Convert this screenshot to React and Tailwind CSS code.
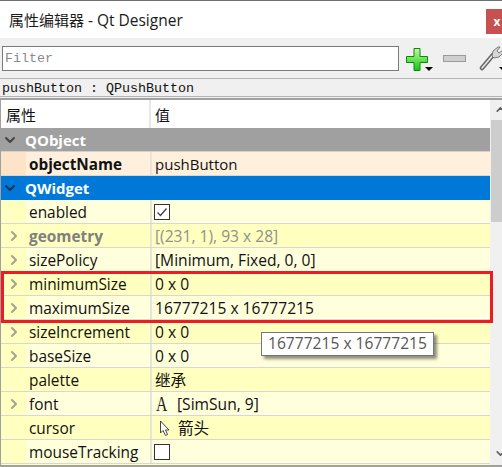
import { ChevronDown, ChevronRight } from 'lucide-react'

const ROWS = [
  { name: 'enabled', check: 'on', light: true },
  { name: 'geometry', value: '[(231, 1), 93 x 28]', arrow: true, muted: true },
  { name: 'sizePolicy', value: '[Minimum, Fixed, 0, 0]', arrow: true, light: true },
  { name: 'minimumSize', value: '0 x 0', arrow: true },
  { name: 'maximumSize', value: '16777215 x 16777215', arrow: true, light: true },
  { name: 'sizeIncrement', value: '0 x 0', arrow: true },
  { name: 'baseSize', value: '0 x 0', arrow: true, light: true },
  { name: 'palette', value: '继承' },
  { name: 'font', value: '[SimSun, 9]', arrow: true, light: true, icon: 'font' },
  { name: 'cursor', value: '箭头', icon: 'cursor' },
  { name: 'mouseTracking', check: 'off', light: true },
]

function PlusIcon() {
  return (
    <svg width="22" height="23" viewBox="0 0 22 23" className="shrink-0">
      <defs>
        <linearGradient id="plusFill" x1="0" y1="0" x2="0" y2="1">
          <stop offset="0" stopColor="#c4f7a8" />
          <stop offset="1" stopColor="#12c80e" />
        </linearGradient>
      </defs>
      <path d="M8 .5h6v8h7.5v6H14v8H8v-8H.5v-6H8z" fill="url(#plusFill)" stroke="#0a8a0a" strokeWidth="1" />
    </svg>
  )
}

function WrenchIcon() {
  return (
    <svg width="24" height="25" viewBox="0 0 24 25" className="shrink-0">
      <path d="M3 22 L14 9" stroke="#666666" strokeWidth="4.5" strokeLinecap="round" />
      <path d="M3 22 L14 9" stroke="#e8e8e8" strokeWidth="1.6" strokeLinecap="round" />
      <path d="M13 10 L14 5 L19 1 L21 1 L18 5 L20 7 L24 4 L24 7 L20 11 L15 12 Z" fill="#d6d6d6" stroke="#777777" strokeWidth="1" />
    </svg>
  )
}

function DropArrow() {
  return <span className="block shrink-0 w-0 h-0 border-x-[4px] border-x-transparent border-t-[4px] border-t-black" />
}

function CheckBox({ on }) {
  return (
    <span className="flex items-center justify-center w-[16px] h-[16px] -ml-[1px] -mt-[1px] bg-white border border-[#333333]">
      {on && (
        <svg width="12" height="12" viewBox="0 0 12 12">
          <path d="M1.5 6.5 L4.5 9.5 L10.5 2.5" fill="none" stroke="#444444" strokeWidth="1.3" />
        </svg>
      )}
    </span>
  )
}

function ValueIcon({ type }) {
  if (type === 'font') {
    return (
      <span className="w-[22px] pl-[1px] text-[21px] leading-none text-[#222222] [font-family:'Liberation_Serif',serif]">
        <span className="inline-block scale-x-75 origin-left">A</span>
      </span>
    )
  }
  return (
    <span className="flex w-[23px] pl-[4px] -mt-[1px]">
      <svg width="12" height="17" viewBox="0 0 12 17">
        <path d="M1.5 1 V13 L4 10.5 L6.5 15.5 L8.5 14.5 L6.5 10 H10 Z" fill="#ffffff" stroke="#444444" strokeWidth="1" />
      </svg>
    </span>
  )
}

function PropRow({ row }) {
  const bg = row.light ? 'bg-[#ffffdc]' : 'bg-[#ffffbf]'
  return (
    <div className={`flex h-[24px] border-b border-[#d8d8d0] ${bg}`}>
      <div className="flex items-center justify-center w-[25px] bg-[#ffffbf]">
        {row.arrow && <ChevronRight size={16} strokeWidth={3} className="text-[#a3a38e]" />}
      </div>
      <div className={`flex items-center w-[126px] pl-[3px] pt-[2px] border-r-2 border-[#e6e6d8] text-[15.4px] ${row.muted ? 'font-bold text-[#808080]' : ''}`}>
        {row.name}
      </div>
      <div className={`flex items-center flex-1 pl-[3px] pt-[2px] text-[15.6px] ${row.muted ? 'text-[#909090]' : ''}`}>
        {row.icon && <ValueIcon type={row.icon} />}
        {row.check ? <CheckBox on={row.check === 'on'} /> : row.value}
      </div>
    </div>
  )
}

export default function App() {
  return (
    <div className="relative w-[502px] h-[467px] overflow-hidden bg-[#f0f0f0] text-[15px] text-[#111111] [font-family:'Open_Sans','Noto_Sans_CJK_SC',sans-serif]">
      {/* Title bar */}
      <div className="flex justify-between h-[38px] bg-white border-t border-[#6e6e6e] pl-[9px]">
        <span className="mt-[9px] text-[15px] leading-[20px] text-[#1a1a1a]">
          属性编辑器 <span className="text-[15.5px]">- Qt Designer</span>
        </span>
        <span className="mt-[8px] flex items-center justify-center w-[16px] h-[25px] bg-[#c75050] text-white text-[12px] font-bold overflow-hidden pl-[6px]">x</span>
      </div>

      {/* Filter and tools */}
      <div className="flex items-start h-[40px] pt-[8px] pl-[2px]">
        <div className="flex items-center shrink-0 w-[397px] h-[25px] bg-white border border-[#7a7a7a] pl-[2px] text-[13.33px] text-[#8a8a8a] [font-family:'Liberation_Mono',monospace]">
          Filter
        </div>
        <div className="flex items-end shrink-0 h-[24px] mt-[1px] ml-[7px]">
          <PlusIcon />
          <span className="-ml-[3px]"><DropArrow /></span>
        </div>
        <span className="shrink-0 mt-[9px] ml-[10px] w-[23px] h-[7px] border border-[#9a9a9a] bg-[#cfcfcf]" />
        <div className="flex items-end shrink-0 h-[25px] ml-[13px]">
          <WrenchIcon />
          <span className="-ml-[4px]"><DropArrow /></span>
        </div>
      </div>

      {/* Class label */}
      <div className="h-[19px] border-y border-[#b4b4b4] pl-[2px] text-[13.33px] leading-[20px] text-[#111111] [font-family:'Liberation_Mono',monospace]">
        pushButton : QPushButton
      </div>

      <div className="flex h-[369px] mt-[1px] border-t-2 border-b-2 border-l border-[#a0a0a0] overflow-hidden">
        <div className="w-[489px] shrink-0">
          {/* Table header */}
          <div className="flex items-center h-[28px] bg-white pl-[5px] text-[15px]">
            <span className="flex items-center w-[145px] h-full pt-[2px] border-r-2 border-[#e6e6e6]">属性</span>
            <span className="pl-[4px] pt-[2px]">值</span>
          </div>

          <div className="flex items-center h-[24px] pt-[1px] bg-[#a0a0a0] border-b border-[#d0d0d0] font-bold text-white">
            <ChevronDown size={16} strokeWidth={3} className="ml-[1px] text-[#444444]" />
            <span className="pl-[7px]">QObject</span>
          </div>
          <div className="flex h-[24px] bg-[#fff0de] border-b border-[#d8d8d0]">
            <div className="w-[25px] bg-[#fde3c8]" />
            <div className="flex items-center w-[126px] pl-[3px] pt-[2px] border-r-2 border-[#ece4d8] font-bold text-[15.3px]">objectName</div>
            <div className="flex items-center pl-[3px] pt-[2px]">pushButton</div>
          </div>
          <div className="flex items-center h-[24px] bg-[#0078d7] font-bold text-white">
            <ChevronDown size={16} strokeWidth={3} className="ml-[1px] text-[#10365c]" />
            <span className="pl-[7px]">QWidget</span>
          </div>
          {ROWS.map((row) => <PropRow key={row.name} row={row} />)}
          {/* Next row, only its first pixels show */}
          <div className="h-[24px] bg-[#ffffbf]" />
        </div>

        {/* Scrollbar, cut off by the picture's right edge */}
        <div className="flex flex-col justify-between shrink-0 w-[18px] ml-[1px] bg-[#f0f0f0]">
          <div>
            <div className="flex justify-center h-[20px] pt-[3px]">
              <ChevronDown size={13} strokeWidth={3} className="rotate-180 text-[#606060]" />
            </div>
            <div className="h-[102px] bg-[#cdcdcd]" />
          </div>
          <div className="flex justify-center pb-[5px]">
            <ChevronDown size={13} strokeWidth={3} className="text-[#606060]" />
          </div>
        </div>
      </div>

      {/* Red highlight drawn over the screenshot */}
      <div className="absolute left-[1px] top-[271px] w-[492px] h-[52px] border-[3px] border-[#ed1c24]" />

      {/* Tooltip */}
      <div className="absolute left-[261px] top-[332px] flex items-center h-[24px] px-[6px] bg-white border border-[#767676] text-[15.6px] text-[#575757] shadow-[3px_3px_3px_rgba(0,0,0,0.45)]">
        16777215 x 16777215
      </div>
    </div>
  )
}
